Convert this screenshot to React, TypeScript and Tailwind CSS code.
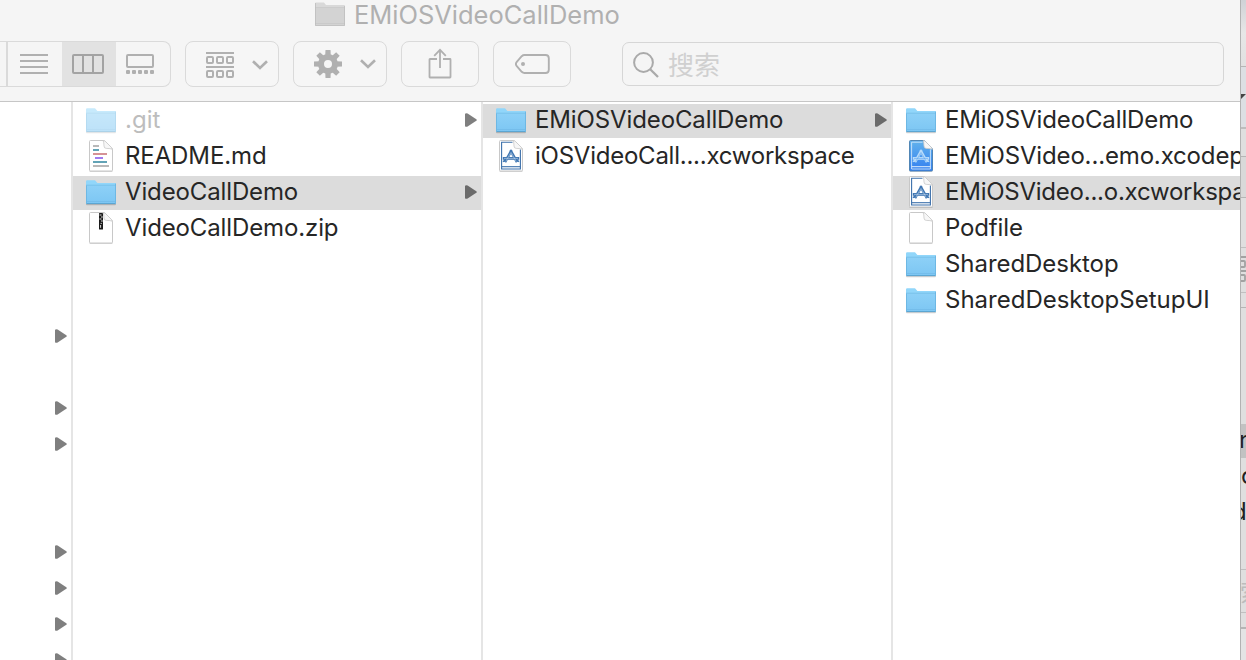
import type { ReactNode } from "react";

const FolderIcon = ({ faded = false }: { faded?: boolean }) => (
  <svg width="32" height="28" viewBox="0 0 32 28" className={faded ? "opacity-50" : ""}>
    <defs>
      <linearGradient id="folderFace" x1="0" y1="0" x2="0" y2="1">
        <stop offset="0" stopColor="#8dd0f7" />
        <stop offset="1" stopColor="#7cc6f3" />
      </linearGradient>
    </defs>
    <rect x="1" y="25.4" width="30" height="1.8" rx="0.9" fill="#000" opacity="0.18" />
    <path d="M1 3.5Q1 2.3 2.2 2.3H10L12.4 4.9H30Q31 4.9 31 5.9V25Q31 26 30 26H2Q1 26 1 25Z" fill="#91d6fa" />
    <path d="M1 7.5H31V25Q31 26 30 26H2Q1 26 1 25Z" fill="url(#folderFace)" />
    <path d="M1 7.2H31" stroke="#71bbe6" strokeWidth="0.8" />
    <path d="M1.5 7.5V25M30.5 5.6V25" stroke="#67b3df" strokeWidth="0.8" />
    <path d="M1.4 25.6H30.6" stroke="#569fc9" strokeWidth="0.9" />
    <path d="M2 23.5H30" stroke="#70b9e6" strokeWidth="0.7" />
  </svg>
);

const Sheet = ({ children, blue = false }: { children?: ReactNode; blue?: boolean }) => (
  <svg width="26" height="34" viewBox="0 0 26 34">
    <defs>
      <linearGradient id="blueSheet" x1="0" y1="0" x2="0" y2="1">
        <stop offset="0" stopColor="#62b3ec" />
        <stop offset="1" stopColor="#347ff0" />
      </linearGradient>
    </defs>
    <path d="M1.5 32H24.5V33H1.5Z" fill="#000" opacity="0.14" />
    <path
      d="M2.5 1.5H15Q16.5 1.5 17.5 2.5L23.5 8.5Q24.5 9.5 24.5 11V31Q24.5 32 23.5 32H2.5Q1.5 32 1.5 31V2.5Q1.5 1.5 2.5 1.5Z"
      fill={blue ? "url(#blueSheet)" : "#fff"}
      stroke={blue ? "#477eae" : "#c2c2c2"}
      strokeWidth="0.9"
    />
    {children}
    <path
      d="M15.2 1.7Q16 3.5 16 7Q16 9.4 18.3 9.4Q22.5 9.4 24.3 10.2L23.3 8.3L17.7 2.7Q16.4 1.5 15.2 1.7Z"
      fill="#f7f7f7"
      stroke="#c9c9c9"
      strokeWidth="0.8"
    />
  </svg>
);

const Tools = ({ color, core }: { color: string; core: string }) => (
  <g fill="none" stroke={color}>
    <path d="M13.6 11.2L7 23.2M12.4 11.2L19 23.2" strokeWidth="2.6" />
    <path d="M4.8 19.4H21.2" strokeWidth="2.8" />
    <path d="M5 22.8L7.2 20.8M21 22.8L18.8 20.8" strokeWidth="1.4" />
    <path d="M12.9 13.5L7.8 22.4M13.1 13.5L18.2 22.4M6 19.4H20" stroke={core} strokeWidth="0.6" />
  </g>
);

const ReadmeIcon = () => (
  <Sheet>
    <g strokeWidth="2">
      <path d="M5 7H11M5 27H21" stroke="#b9b9b9" />
      <path d="M5 11H11M5 23H19" stroke="#62a3b6" />
      <path d="M5 15H19" stroke="#d59296" />
      <path d="M7 19H15" stroke="#a07cf0" />
    </g>
  </Sheet>
);

const ZipIcon = () => (
  <Sheet>
    <rect x="11" y="2" width="4" height="16.5" rx="0.6" fill="#1a1a1a" />
    <path
      d="M11.5 4H13.5M13 6H14.8M11.5 8H13.5M13 10H14.8M12.6 12.4H13.8M12.6 14V16.8"
      stroke="#d8d8d8"
      strokeWidth="1"
    />
  </Sheet>
);

const WorkspaceIcon = () => (
  <Sheet>
    <path d="M14.5 3.2H3.6V30H22.4V10.4" fill="none" stroke="#3c70ab" strokeWidth="1.1" />
    <path d="M3.6 27.7H22.4" stroke="#3c70ab" strokeWidth="1.1" />
    <Tools color="#3f76b2" core="#c6d9ec" />
  </Sheet>
);

const ProjectIcon = () => (
  <Sheet blue>
    <path d="M14.5 3.2H3.6V30H22.4V10.4" fill="none" stroke="#cfe6fb" strokeWidth="0.9" />
    <path d="M3.6 27.7H22.4" stroke="#e0effd" strokeWidth="1" />
    <Tools color="#b9dcfa" core="#5aa3ee" />
  </Sheet>
);

const icons = {
  folder: <FolderIcon />,
  faded: <FolderIcon faded />,
  readme: <ReadmeIcon />,
  zip: <ZipIcon />,
  workspace: <WorkspaceIcon />,
  project: <ProjectIcon />,
  blank: <Sheet />,
};

const Arrow = ({ dark = false }: { dark?: boolean }) => (
  <svg width="12" height="14" viewBox="0 0 12 14" className="shrink-0">
    <path
      d="M0 .8Q1.2-.2 2.6.6L11.3 6.2Q12.3 7 11.3 7.8L2.6 13.4Q1.2 14.2 0 13.2Z"
      fill={dark ? "#6b6b6b" : "#7f7f7f"}
    />
  </svg>
);

type Item = {
  icon: keyof typeof icons;
  name: string;
  spacing: string;
  selected?: boolean;
  arrow?: boolean;
};

const first: Item[] = [
  { icon: "faded", name: ".git", spacing: "tracking-[0px]", arrow: true },
  { icon: "readme", name: "README.md", spacing: "tracking-[-0.11px]" },
  { icon: "folder", name: "VideoCallDemo", spacing: "tracking-[-0.13px]", selected: true, arrow: true },
  { icon: "zip", name: "VideoCallDemo.zip", spacing: "tracking-[-0.12px]" },
];

const second: Item[] = [
  { icon: "folder", name: "EMiOSVideoCallDemo", spacing: "tracking-[-0.12px]", selected: true, arrow: true },
  { icon: "workspace", name: "iOSVideoCall....xcworkspace", spacing: "tracking-[-0.24px]" },
];

const third: Item[] = [
  { icon: "folder", name: "EMiOSVideoCallDemo", spacing: "tracking-[-0.12px]" },
  { icon: "project", name: "EMiOSVideo...emo.xcodeproj", spacing: "tracking-[-0.15px]" },
  { icon: "workspace", name: "EMiOSVideo...o.xcworkspace", spacing: "tracking-[-0.24px]", selected: true },
  { icon: "blank", name: "Podfile", spacing: "tracking-[-0.14px]" },
  { icon: "folder", name: "SharedDesktop", spacing: "tracking-[-0.05px]" },
  { icon: "folder", name: "SharedDesktopSetupUI", spacing: "tracking-[0px]" },
];

const Column = ({ items, width }: { items: Item[]; width: string }) => (
  <ul className={`flex h-full shrink-0 flex-col gap-0.5 overflow-hidden border-l-2 border-[#e5e5e5] pt-0.5 ${width}`}>
    {items.map((item) => (
      <li
        key={item.name}
        className={`flex h-[34px] shrink-0 items-center pr-1 pb-0.5 pl-3 ${item.selected ? "bg-[#dcdcdc]" : ""}`}
      >
        <span className="flex w-8 shrink-0 justify-center">{icons[item.icon]}</span>
        <span
          className={`ml-2 flex-1 text-[24px] leading-[32px] whitespace-nowrap ${item.spacing} ${item.icon === "faded" ? "text-[#bdbdbd]" : "text-[#262626]"}`}
        >
          {item.name}
        </span>
        {item.arrow && <Arrow dark={item.selected} />}
      </li>
    ))}
  </ul>
);

const ToolButton = ({ width, children }: { width: string; children: ReactNode }) => (
  <button className={`flex h-[46px] shrink-0 items-center rounded-[8px] border border-[#dadada] bg-[#f6f6f6] ${width}`}>
    {children}
  </button>
);

const Chevron = () => (
  <svg width="16" height="10" viewBox="0 0 16 10" fill="none" stroke="#b0b0b0" strokeWidth="2.6">
    <path d="M1 1.2L8 8L15 1.2" />
  </svg>
);

const teeth = [0, 45, 90, 135, 180, 225, 270, 315];

const Toolbar = () => (
  <div className="flex h-[46px] items-center">
    <div className="flex h-[46px] w-[171px] shrink-0 overflow-hidden rounded-r-[8px] border border-l-0 border-[#dadada]">
      <div className="w-[8px] shrink-0 border-r-2 border-[#dadada]" />
      <div className="flex w-[54px] items-center justify-center pr-0.5">
        <svg width="28" height="20" viewBox="0 0 28 20" stroke="#b0b0b0" strokeWidth="2">
          <path d="M0 1H28M0 7H28M0 13H28M0 19H28" />
        </svg>
      </div>
      <div className="flex w-[54px] items-center justify-center bg-[#e2e2e2] pr-0.5">
        <svg width="32" height="20" viewBox="0 0 32 20" fill="none" stroke="#a3a3a3" strokeWidth="2">
          <rect x="1" y="1" width="30" height="18" rx="1" />
          <path d="M11 1V19M21 1V19" />
        </svg>
      </div>
      <div className="flex flex-1 items-center pl-[10px]">
        <svg width="28" height="20" viewBox="0 0 28 20" fill="none" stroke="#b0b0b0" strokeWidth="2">
          <rect x="1" y="1" width="26" height="12" rx="1" />
          <g fill="#b0b0b0" stroke="none">
            {[0, 6, 12, 18, 24].map((x) => (
              <rect key={x} x={x} y="16" width="4" height="4" rx="1" />
            ))}
          </g>
        </svg>
      </div>
    </div>
    <div className="ml-[14px] flex">
      <ToolButton width="w-[94px] pl-[20px] gap-[18px] pt-0.5">
        <svg width="28" height="26" viewBox="0 0 28 26" fill="none" stroke="#b0b0b0" strokeWidth="2">
          <path d="M0 1H28M0 15H28" />
          {[1, 11, 21].map((x) => (
            <g key={x}>
              <rect x={x} y="5" width="6" height="6" rx="1" />
              <rect x={x} y="19" width="6" height="6" rx="1" />
            </g>
          ))}
        </svg>
        <Chevron />
      </ToolButton>
    </div>
    <div className="ml-[14px] flex">
      <ToolButton width="w-[94px] pl-[20px] gap-[18px]">
        <svg width="28" height="28" viewBox="-14 -14 28 28" fill="#b0b0b0">
          {teeth.map((angle) => (
            <path key={angle} d="M-2.8 -8L-2.5 -14H2.5L2.8 -8Z" transform={`rotate(${angle})`} />
          ))}
          <circle r="7" fill="none" stroke="#b0b0b0" strokeWidth="6" />
        </svg>
        <Chevron />
      </ToolButton>
    </div>
    <div className="ml-[14px] flex">
      <ToolButton width="w-[78px] pl-[26px]">
        <svg width="24" height="32" viewBox="0 0 24 32" fill="none" stroke="#b0b0b0" strokeWidth="1.8">
          <path d="M9 11H2Q1.5 11 1.5 11.5V29Q1.5 29.5 2 29.5H22Q22.5 29.5 22.5 29V11.5Q22.5 11 22 11H15" />
          <path d="M12 20V1.8M6.2 7.8L12 1.8L17.8 7.8" />
        </svg>
      </ToolButton>
    </div>
    <div className="ml-[14px] flex">
      <ToolButton width="w-[78px] pl-[21px]">
        <svg width="35" height="20" viewBox="0 0 35 20" fill="none" stroke="#b0b0b0" strokeWidth="1.9">
          <path d="M9.5 1H30.5Q33.8 1 33.8 4.3V15.7Q33.8 19 30.5 19H9.5Q8 19 6.7 17.8L1.8 12.2Q0 10 1.8 7.8L6.7 2.2Q8 1 9.5 1Z" />
          <circle cx="8" cy="10" r="2" fill="#b0b0b0" stroke="none" />
        </svg>
      </ToolButton>
    </div>
    <div className="ml-[51px] flex h-[44px] w-[602px] items-center rounded-[7px] border border-[#d6d6d6] pt-0.5 pl-[10px]">
      <svg width="26" height="26" viewBox="0 0 26 26" fill="none" stroke="#aaa" strokeWidth="2">
        <circle cx="10.5" cy="10.5" r="9.4" />
        <path d="M17.2 17.2L25 25" strokeWidth="2.3" />
      </svg>
      <span className="ml-[9px] pb-0.5 font-['Noto_Sans_CJK_SC',sans-serif] text-[26px] leading-[40px] text-[#d0d0d0]">搜索</span>
    </div>
  </div>
);

const sidebarArrows = ["mt-[227px]", "mt-[58px]", "mt-[22px]", "mt-[94px]", "mt-[22px]", "mt-[22px]", "mt-[22px]"];

export default function App() {
  return (
    <div className="flex h-[660px] w-[1246px] overflow-hidden bg-white font-['Inter',sans-serif]">
      <main className="flex w-[1240px] shrink-0 flex-col overflow-hidden">
        <header className="flex h-[102px] shrink-0 flex-col border-b border-[#c6c6c6] bg-[#f5f5f5]">
          <div className="flex h-[41px] shrink-0 items-start pt-px pl-[314px]">
            <svg width="32" height="27" viewBox="0 0 32 27">
              <path d="M1 2.4Q1 1.4 2 1.4H10L12 4H30Q31 4 31 5V24Q31 25 30 25H2Q1 25 1 24Z" fill="#d9d9d9" />
              <path d="M1 7H31V24.5H1Z" fill="#d3d3d3" />
              <path d="M1 6.5H31M1 22.5H31" stroke="#c6c6c6" strokeWidth="0.7" />
              <path d="M1.5 2V24.5H30.5V5" fill="none" stroke="#bebebe" strokeWidth="0.8" />
            </svg>
            <h1 className="ml-[8px] text-[25.5px] leading-[28px] tracking-[-0.02px] whitespace-nowrap text-[#b0b0b0]">
              EMiOSVideoCallDemo
            </h1>
          </div>
          <Toolbar />
        </header>
        <div className="flex flex-1 overflow-hidden">
          <aside className="flex w-[71px] shrink-0 flex-col items-end overflow-hidden pr-1">
            {sidebarArrows.map((gap, i) => (
              <div key={i} className={`shrink-0 ${gap}`}>
                <Arrow />
              </div>
            ))}
          </aside>
          <Column items={first} width="w-[410px]" />
          <Column items={second} width="w-[410px]" />
          <Column items={third} width="w-[349px]" />
        </div>
      </main>
      <aside className="flex w-[6px] shrink-0 flex-col overflow-hidden border-l border-[#b2b2b2] bg-[#dfdfdf] text-[24px] text-[#222]">
        <div className="h-[67px] shrink-0 border-b border-[#b5b5b5] bg-linear-to-b from-[#d0d2d6] via-[#e7e7e7] to-[#e1e1e1]" />
        <div className="flex h-[62px] shrink-0 items-start border-b-2 border-[#bdbdbd] bg-[#dcdfe3] pt-[27px]">
          <svg width="5" height="5" viewBox="0 0 5 5">
            <path d="M0 0H5L0 5Z" fill="#444" />
          </svg>
        </div>
        <div className="h-[28px] shrink-0 border-b border-[#b5b5b5]" />
        <div className="h-[41px] shrink-0 border-b border-[#b5b5b5] bg-[#d9d9d9]" />
        <div className="h-[50px] shrink-0 border-b border-[#c0c0c0]" />
        <div className="flex h-[45px] shrink-0 items-center border-b border-[#c0c0c0]">
          <svg width="5" height="28" viewBox="0 0 5 28" fill="none" stroke="#a2a2a2" strokeWidth="1.8">
            <path d="M0 1H5M0 15H5" />
            <rect x="-3" y="5" width="7" height="6" rx="1" />
            <rect x="-3" y="19" width="7" height="6" rx="1" />
          </svg>
        </div>
        <div className="h-[15px] shrink-0 border-b border-[#b5b5b5]" />
        <div className="h-[116px] shrink-0" />
        <div className="h-[34px] shrink-0 bg-[#c2c2c2] leading-[32px]">
          <span className="-ml-[2px]">n</span>
        </div>
        <div className="h-[36px] shrink-0 leading-[36px]">c</div>
        <div className="h-[36px] shrink-0 leading-[36px]">
          <span className="-ml-[9px]">d</span>
        </div>
        <div className="h-[40px] shrink-0 border-b border-[#c0c0c0]" />
        <div className="h-[43px] shrink-0 overflow-hidden border-b border-[#c0c0c0] font-['Noto_Sans_CJK_SC',sans-serif] leading-[42px] text-[#bcbcbc]">
          <span className="-ml-[1px]">索</span>
        </div>
        <div className="h-[16px] shrink-0 border-b-2 border-[#b5b5b5]" />
        <div className="flex-1 bg-[#e4e4e4]" />
      </aside>
    </div>
  );
}
